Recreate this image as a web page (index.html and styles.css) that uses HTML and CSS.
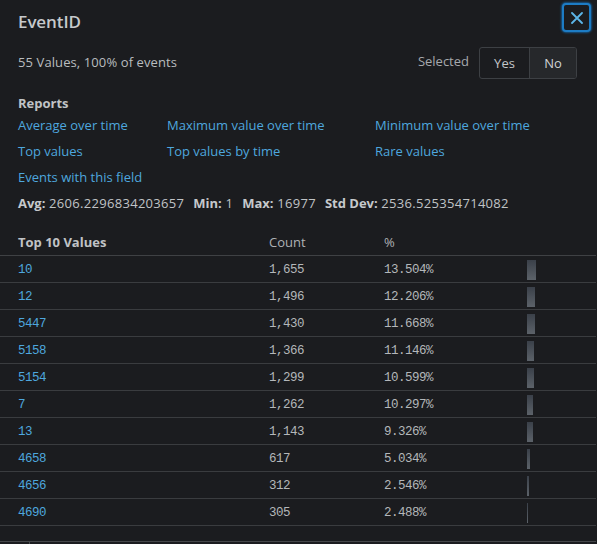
FILE: index.html
```html
<!DOCTYPE html>
<html lang="en">
<head>
<meta charset="utf-8">
<title>EventID</title>
<link rel="stylesheet" href="styles.css">
</head>
<body>
<div class="panel">
  <div class="header">
    <h1 class="title">EventID</h1>
    <button class="close" aria-label="Close">
      <svg width="12" height="12" viewBox="0 0 12 12"><path d="M1 1 L11 11 M11 1 L1 11" stroke="#5cb6e8" stroke-width="1.8" stroke-linecap="round" fill="none"/></svg>
    </button>
  </div>
  <div class="summary">
    <span class="summary-text">55 Values, 100% of events</span>
    <div class="selected">
      <span class="selected-label">Selected</span>
      <div class="toggle">
        <button class="seg">Yes</button>
        <button class="seg seg-active">No</button>
      </div>
    </div>
  </div>
  <h2 class="reports-title">Reports</h2>
  <div class="links">
    <a class="link">Average over time</a>
    <a class="link">Maximum value over time</a>
    <a class="link">Minimum value over time</a>
    <a class="link">Top values</a>
    <a class="link">Top values by time</a>
    <a class="link">Rare values</a>
    <a class="link">Events with this field</a>
  </div>
  <div class="stats">
    <span class="stat"><b>Avg:</b> 2606.2296834203657</span>
    <span class="stat"><b>Min:</b> 1</span>
    <span class="stat"><b>Max:</b> 16977</span>
    <span class="stat"><b>Std Dev:</b> 2536.525354714082</span>
  </div>
  <table class="values">
    <colgroup><col class="c1"><col class="c2"><col class="c3"><col class="c4"></colgroup>
    <thead>
      <tr><th class="th-main">Top 10 Values</th><th>Count</th><th>%</th><th></th></tr>
    </thead>
    <tbody>
      <tr><td class="val">10</td><td class="num">1,655</td><td class="num">13.504%</td><td class="bar-cell"><div class="bar" style="width:9px"></div></td></tr>
      <tr><td class="val">12</td><td class="num">1,496</td><td class="num">12.206%</td><td class="bar-cell"><div class="bar" style="width:8px"></div></td></tr>
      <tr><td class="val">5447</td><td class="num">1,430</td><td class="num">11.668%</td><td class="bar-cell"><div class="bar" style="width:8px"></div></td></tr>
      <tr><td class="val">5158</td><td class="num">1,366</td><td class="num">11.146%</td><td class="bar-cell"><div class="bar" style="width:7px"></div></td></tr>
      <tr><td class="val">5154</td><td class="num">1,299</td><td class="num">10.599%</td><td class="bar-cell"><div class="bar" style="width:7px"></div></td></tr>
      <tr><td class="val">7</td><td class="num">1,262</td><td class="num">10.297%</td><td class="bar-cell"><div class="bar" style="width:6px"></div></td></tr>
      <tr><td class="val">13</td><td class="num">1,143</td><td class="num">9.326%</td><td class="bar-cell"><div class="bar" style="width:6px"></div></td></tr>
      <tr><td class="val">4658</td><td class="num">617</td><td class="num">5.034%</td><td class="bar-cell"><div class="bar" style="width:3px"></div></td></tr>
      <tr><td class="val">4656</td><td class="num">312</td><td class="num">2.546%</td><td class="bar-cell"><div class="bar" style="width:2px"></div></td></tr>
      <tr><td class="val">4690</td><td class="num">305</td><td class="num">2.488%</td><td class="bar-cell"><div class="bar" style="width:1px"></div></td></tr>
    </tbody>
  </table>
</div>
<div class="below"><span class="below-rule"></span></div>
</body>
</html>
```

FILE: styles.css
```css
html, body {
  margin: 0;
  padding: 0;
}
body {
  background: #1b1c1f;
  font-family: "Open Sans", "Liberation Sans", sans-serif;
  font-size: 13px;
  color: #b9bcbf;
  width: 597px;
  height: 544px;
  overflow: hidden;
}
.panel {
  width: 596px;
  height: 541px;
  border-bottom: 1px solid #45474a;
  background: #1b1c1f;
}
.header {
  display: flex;
  justify-content: space-between;
  align-items: flex-start;
  height: 47px;
  padding: 0 5px 0 18px;
  box-sizing: border-box;
}
.title {
  margin: 11px 0 0;
  font-size: 17px;
  line-height: 22px;
  font-weight: 600;
  color: #c6c9cc;
  letter-spacing: -0.1px;
}
.close {
  margin-top: 3px;
  width: 29px;
  height: 29px;
  padding: 0;
  box-sizing: border-box;
  background: #1b1c1f;
  border: 2px solid #1d7cc4;
  border-radius: 4px;
  box-shadow: 0 0 2px 1px rgba(20, 110, 180, 0.7);
  display: flex;
  align-items: center;
  justify-content: center;
}
.summary {
  display: flex;
  justify-content: space-between;
  align-items: center;
  height: 32px;
  padding: 0 19px 0 18px;
}
.summary-text {
  color: #b9bcbf;
  line-height: 18px;
  margin-bottom: 2px;
  letter-spacing: 0.1px;
}
.selected {
  display: flex;
  align-items: center;
  gap: 10px;
}
.selected-label {
  color: #a6a9ad;
  margin-bottom: 5px;
}
.toggle {
  display: flex;
  height: 32px;
  border: 1px solid #3d4044;
  border-radius: 3px;
  box-sizing: border-box;
  overflow: hidden;
}
.seg {
  font-family: inherit;
  font-size: 13px;
  color: #c3c6c9;
  background: transparent;
  border: 0;
  padding: 0;
  width: 49px;
  height: 30px;
}
.seg-active {
  width: 47px;
  background: #26282b;
  border-left: 1px solid #3d4044;
  color: #d0d3d6;
}
.reports-title {
  margin: 15px 0 0 18px;
  font-size: 13px;
  line-height: 18px;
  font-weight: 700;
  color: #c0c3c6;
}
.links {
  display: grid;
  grid-template-columns: 149px 208px auto;
  grid-auto-rows: 26px;
  align-items: center;
  padding-left: 18px;
}
.link {
  color: #4ea7de;
  cursor: pointer;
}
.stats {
  padding-left: 18px;
  line-height: 26px;
  color: #c0c3c6;
  display: flex;
  gap: 9px;
  letter-spacing: 0.3px;
}
.stats b {
  font-weight: 700;
  color: #c6c9cc;
  letter-spacing: 0;
}
.values {
  margin-top: 13px;
  width: 596px;
  border-collapse: collapse;
  table-layout: fixed;
}
.c1 { width: 269px; }
.c2 { width: 115px; }
.c3 { width: 143px; }
.values th {
  text-align: left;
  font-weight: 400;
  color: #aeb1b5;
  height: 26px;
  padding: 0;
  border-bottom: 1px solid #3f4144;
  line-height: 26px;
}
.values th.th-main {
  padding-left: 18px;
  font-weight: 700;
  color: #c0c3c6;
}
.values td {
  height: 24px;
  padding: 2px 0 0;
  border-bottom: 1px solid #3a3c3f;
  font-family: "Liberation Mono", "DejaVu Sans Mono", monospace;
  font-size: 12.5px;
  letter-spacing: -0.5px;
  line-height: 24px;
  vertical-align: middle;
}
.values td.bar-cell {
  padding: 0;
  height: 26px;
}
.values td.val {
  padding-left: 18px;
  color: #4ea7de;
}
.values td.num {
  color: #b4b7ba;
}
.bar {
  height: 20px;
  margin-top: 1px;
  background: linear-gradient(to bottom, #3a4049, #5c6269);
}
.below {
  height: 2px;
  position: relative;
  background: #1b1c1f;
}
.below-rule {
  position: absolute;
  left: 29px;
  top: 0;
  width: 1px;
  height: 2px;
  background: #45474a;
}
```
